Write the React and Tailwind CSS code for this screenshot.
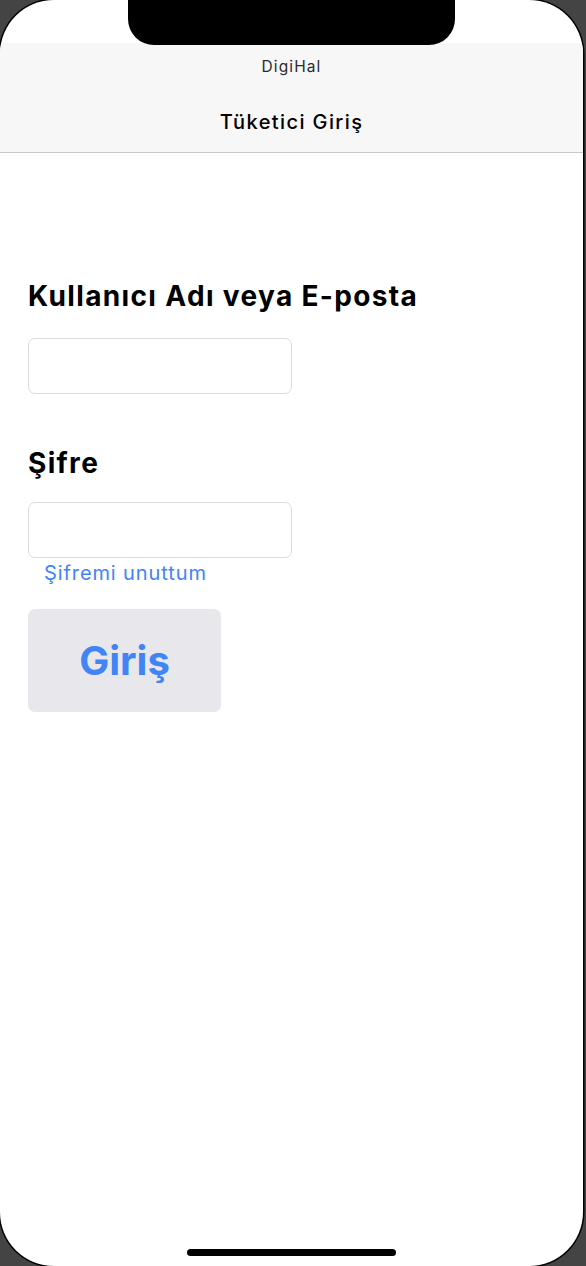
import React from "react";

export default function App() {
  return (
    <div className="w-[586px] h-[1266px] bg-[#444444] overflow-hidden font-['Inter','Noto_Sans',sans-serif]">
      {/* phone screen */}
      <div className="relative w-[583px] h-[1266px] bg-white rounded-[54px] shadow-[0_0_0_1.5px_#000] overflow-hidden">
        {/* notch */}
        <div className="absolute left-[128px] top-0 w-[327px] h-[45px] bg-black rounded-b-[26px]" />

        <div className="h-[43px]" />

        {/* nav header */}
        <div className="bg-[#f7f7f7] border-b border-[#c9c9c9] pt-[14px] pb-[16px] flex flex-col items-center">
          <p className="text-[15.5px] leading-[20px] tracking-[1.1px] text-[#2b2b2b]">DigiHal</p>
          <h1 className="mt-[31px] text-[20px] leading-[28px] tracking-[1.4px] font-medium text-black">Tüketici Giriş</h1>
        </div>

        {/* form */}
        <div className="px-[28px] pt-[127px]">
          <label className="block text-[28px] leading-[32px] font-bold text-black tracking-[1.35px]">
            Kullanıcı Adı veya E-posta
          </label>
          <input
            type="text"
            className="mt-[26px] block w-[264px] h-[56px] border border-[#dcdcdc] rounded-[7px] px-3 outline-none"
          />

          <label className="block mt-[53px] text-[28px] leading-[32px] font-bold text-black tracking-[1.35px]">Şifre</label>
          <input
            type="password"
            className="mt-[23px] block w-[264px] h-[56px] border border-[#dcdcdc] rounded-[7px] px-3 outline-none"
          />
          <button className="mt-[3px] ml-[16px] block text-[20px] leading-[24px] tracking-[0.9px] text-[#4184f5]">
            Şifremi unuttum
          </button>

          <button className="mt-[24px] w-[193px] h-[103px] bg-[#e8e8ec] rounded-[7px] flex items-center justify-center text-[40px] font-bold text-[#4184f5]">
            Giriş
          </button>
        </div>

        {/* home indicator */}
        <div className="absolute left-[187px] top-[1249px] w-[209px] h-[7px] rounded-full bg-black" />
      </div>
    </div>
  );
}
